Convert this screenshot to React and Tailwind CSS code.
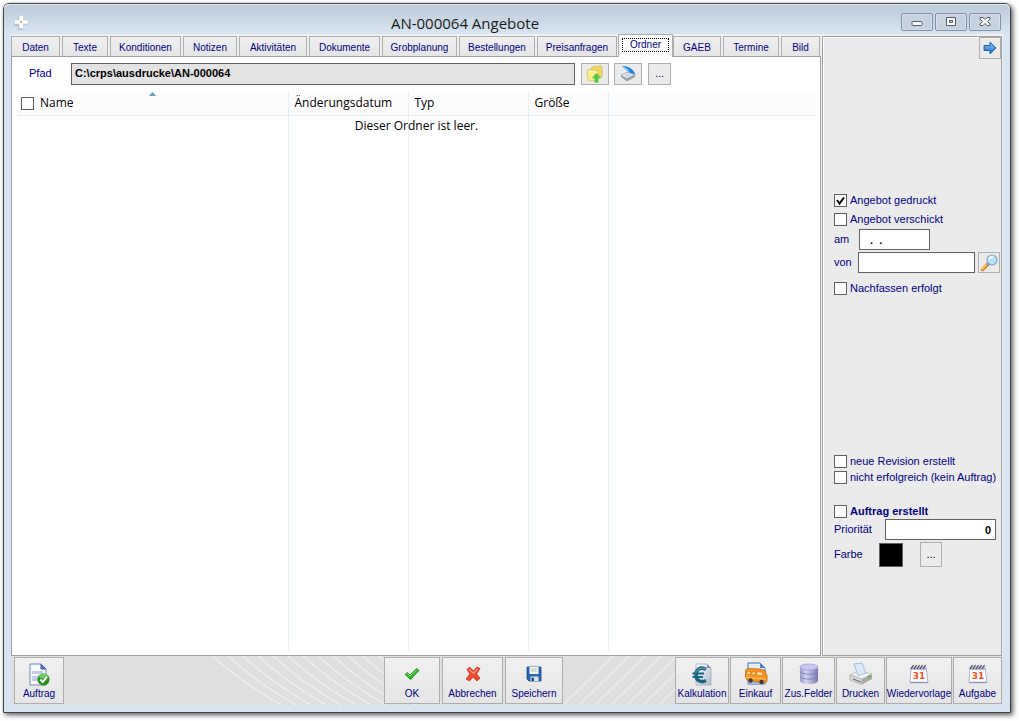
import React, { useState } from 'react';

const tabs = [
  { name: 'Daten', width: 'w-[49px]' },
  { name: 'Texte', width: 'w-[46px]' },
  { name: 'Konditionen', width: 'w-[71px]' },
  { name: 'Notizen', width: 'w-[54px]' },
  { name: 'Aktivitäten', width: 'w-[68px]' },
  { name: 'Dokumente', width: 'w-[71px]' },
  { name: 'Grobplanung', width: 'w-[75px]' },
  { name: 'Bestellungen', width: 'w-[76px]' },
  { name: 'Preisanfragen', width: 'w-[80px]' },
  { name: 'Ordner', width: 'w-[55px]' },
  { name: 'GAEB', width: 'w-[48px]' },
  { name: 'Termine', width: 'w-[56px]' },
  { name: 'Bild', width: 'w-[39px]' },
];

/* ---------- icons ---------- */

function PlusLogo() {
  return (
    <svg width="16" height="16" viewBox="0 0 16 16">
      <path d="M5 3h4v4h5v4H10v5H5v-4H1V7h4z" fill="#a9b4c0" opacity=".7" />
      <path d="M6 1.500h4.500V6H15v4h-4.500v4.500H6V10H1.500V6H6z" fill="#fff" stroke="#b9d3e6" strokeWidth=".6" />
      <circle cx="8" cy="8" r="1" fill="#f08040" />
    </svg>
  );
}

function FolderUpIcon() {
  return (
    <svg width="18" height="18" viewBox="0 0 18 18">
      <path d="M5 3l4-2 1 1 5-1.500 1 1V12l-4 2H5z" fill="#f3d75e" stroke="#d9b63a" strokeWidth=".7" />
      <path d="M1 5l5-1 1 1.500h5V15l-7 1-3-1z" fill="#fbe98b" stroke="#e0bf48" strokeWidth=".7" />
      <path d="M2.500 7l7-1v8" stroke="#fff6bd" fill="none" />
      <path d="M10.500 8l4.500 5h-2.500v4.500h-4V13H6z" fill="#52c840" stroke="#8be077" strokeWidth=".7" />
    </svg>
  );
}

function ScannerIcon() {
  return (
    <svg width="18" height="18" viewBox="0 0 18 18">
      <path d="M2 10l7-3 7 3v2l-8 4.500L2 12z" fill="#9aa3ad" />
      <path d="M2 10l7-3 7 2.500-8 4z" fill="#eef2f6" stroke="#8b95a0" strokeWidth=".6" />
      <path d="M5 10l4-1.600 4 1.400-5 2.200z" fill="#c8d0d8" />
      <path d="M3 1c5-.5 11 2 13.500 8.500L9.500 7.500z" fill="#1f83dc" />
      <path d="M3 1c3 .5 6 2.500 8 6.900L9.500 7.500z" fill="#8fcdf8" />
    </svg>
  );
}

function ArrowIcon() {
  return (
    <svg width="14" height="14" viewBox="0 0 14 14">
      <defs>
        <linearGradient id="arrow" x1="0" y1="0" x2="0" y2="1">
          <stop offset="0" stopColor="#8cc8fa" />
          <stop offset="1" stopColor="#1a6fd4" />
        </linearGradient>
      </defs>
      <path d="M1 4.500h6V1.200L13 7l-6 5.800V9.500H1z" fill="url(#arrow)" stroke="#1b5fae" />
    </svg>
  );
}

function MagnifierIcon() {
  return (
    <svg width="18" height="18" viewBox="0 0 18 18">
      <path d="M1.500 16.500l6.500-6.500" stroke="#d97b26" strokeWidth="3.400" />
      <path d="M1.500 15.500l5.500-5.500" stroke="#ffc25e" strokeWidth="1.800" />
      <path d="M7 11l1.500-1.500" stroke="#8a94a0" strokeWidth="2.500" />
      <circle cx="12" cy="6" r="5" fill="#b6e2fb" stroke="#86a7c8" strokeWidth="1.200" />
      <path d="M9 5.500c.5-2 2-2.700 4-2.500" stroke="#fff" strokeWidth="1.500" fill="none" />
    </svg>
  );
}

function OrderIcon() {
  return (
    <svg width="22" height="23" viewBox="0 0 22 23">
      <path d="M2 1h11l5 5v16H2z" fill="#f7f9fd" stroke="#7286ad" />
      <path d="M13 1v5h5z" fill="#5b7ec0" stroke="#40619f" />
      <path d="M4 8h11v3H4zM4 13h9v5H4z" fill="#c5cde6" />
      <circle cx="15.500" cy="16.500" r="6" fill="#1f9212" />
      <path d="M10.500 14a5.500 5.500 0 0 1 10 0c-3 2-7 2-10 0z" fill="#6ccb5e" />
      <path d="M12.300 16.500l2.400 2.500 4.300-5" stroke="#fff" strokeWidth="2" fill="none" />
    </svg>
  );
}

function OkIcon() {
  return (
    <svg width="16" height="16" viewBox="0 0 16 16">
      <path d="M1 8.500L3.500 6.500 6 9l6.500-6.500 2.500 2L6.500 13.500z" fill="#2fb52a" stroke="#1c8c1a" strokeWidth=".8" />
      <path d="M3.500 7.500L6 10l6.500-6" stroke="#83e072" strokeWidth=".9" fill="none" />
    </svg>
  );
}

function CancelIcon() {
  return (
    <svg width="16" height="16" viewBox="0 0 16 16">
      <path d="M2 3.500L4.500 1 8.500 5 12 1l3 1.500L11.500 8l3.500 4-3 3L8 11l-3.500 4-3.500-2L5 8z" fill="#f04a2c" stroke="#c12f18" strokeWidth=".8" strokeLinejoin="round" />
      <path d="M4 3.500l4.500 4L12.500 3" stroke="#ff9a80" strokeWidth="1.200" fill="none" />
    </svg>
  );
}

function DiskIcon() {
  return (
    <svg width="16" height="16" viewBox="0 0 16 16">
      <path d="M1 1h14v14H3l-2-2z" fill="#2367b5" stroke="#174b8c" strokeWidth=".8" />
      <path d="M3.500 1h9v7h-9z" fill="#fafafa" />
      <path d="M5 3h6M5 5h6" stroke="#b5b5b5" />
      <path d="M4.500 10.500h8V15h-8z" fill="#dfe6ee" />
      <path d="M5.500 11.500h2.500V15H5.500z" fill="#27507f" />
    </svg>
  );
}

function EuroIcon() {
  return (
    <svg width="22" height="23" viewBox="0 0 22 23">
      <defs>
        <linearGradient id="sheet" x1="0" y1="0" x2="1" y2="1">
          <stop offset="0" stopColor="#fff" />
          <stop offset="1" stopColor="#b3bbcf" />
        </linearGradient>
      </defs>
      <path d="M5 1h11l4 4v17H5z" fill="url(#sheet)" stroke="#a2adc2" strokeWidth=".8" />
      <path d="M16 1v4h4z" fill="#7d93bd" />
      <path d="M15 6.500C9 3 4.500 7 5 12.500S10 20 15 17.500" stroke="#1c6480" strokeWidth="3.600" fill="none" />
      <path d="M14.500 6C9 3.500 4.500 7 4.500 12" stroke="#69b3c9" strokeWidth="1" fill="none" />
      <path d="M1.500 10.500H13M1.500 14H12" stroke="#1c6480" strokeWidth="1.800" />
    </svg>
  );
}

function VanIcon() {
  return (
    <svg width="24" height="24" viewBox="0 0 24 24">
      <path d="M4 1h12l5 5v16H4z" fill="#e6eefc" stroke="#3f6cb4" />
      <path d="M16 1v5h5z" fill="#4f83d0" />
      <path d="M4 17h17v5H4z" fill="#9bb8e6" />
      <path d="M1.500 8l3-1.500 11 .5 5 1.500 2.500 5v6l-3 1.500L3 18l-1.500-3z" fill="#f8961e" stroke="#c46608" strokeWidth=".8" />
      <path d="M3 9.500h3.500l.5 3H3zM8 9.800h3l.5 3H8zM12.500 10h5l2.500 3.500h-7z" fill="#ffd890" stroke="#c46a10" strokeWidth=".5" />
      <path d="M2 15.500l20 1.500" stroke="#ffc46c" />
      <circle cx="6.500" cy="18.500" r="2.200" fill="#413932" />
      <circle cx="17.500" cy="20" r="2.200" fill="#413932" />
    </svg>
  );
}

function DatabaseIcon() {
  return (
    <svg width="20" height="22" viewBox="0 0 20 22">
      <defs>
        <linearGradient id="cyl" x1="0" y1="0" x2="1" y2="0">
          <stop offset="0" stopColor="#9d9dcb" />
          <stop offset=".35" stopColor="#d4d4f3" />
          <stop offset="1" stopColor="#7878ad" />
        </linearGradient>
      </defs>
      <path d="M1 4v14c0 4 18 4 18 0V4z" fill="url(#cyl)" />
      <ellipse cx="10" cy="4" rx="9" ry="3" fill="#c9c9ef" stroke="#9a9ac8" strokeWidth=".7" />
      <path d="M1 8.500c0 3.500 18 3.500 18 0M1 13.500c0 3.500 18 3.500 18 0" stroke="#7474aa" strokeWidth=".8" fill="none" />
    </svg>
  );
}

function PrinterIcon() {
  return (
    <svg width="24" height="24" viewBox="0 0 24 24">
      <path d="M1 13l9-4 13 3v5L13 22.500 1 18z" fill="#a9a9a9" />
      <path d="M1 13l9-4 13 3-10 5z" fill="#f2f2f2" stroke="#b2b2b2" strokeWidth=".6" />
      <path d="M1 13l12 4v5.500L1 18z" fill="#d9d9d9" stroke="#a6a6a6" strokeWidth=".6" />
      <path d="M5 2l8-1 4 10-8 2.500z" fill="#d6eafa" stroke="#94b5d2" strokeWidth=".8" />
      <path d="M4 17l8 3" stroke="#6d6d6d" strokeWidth="1.300" />
      <circle cx="20" cy="14.500" r="1.300" fill="#4cc735" />
    </svg>
  );
}

function CalendarIcon() {
  return (
    <svg width="20" height="22" viewBox="0 0 20 22">
      <path d="M2 4h15l2 15.500H1z" fill="#fdfdff" stroke="#9aa3c8" strokeWidth=".8" />
      <path d="M2 4h15.500v3H2z" fill="#b6badb" />
      <path d="M2 6l2.500-4M5 6l2.500-4M8 6l2.500-4M11 6l2.500-4M14 6l2.500-4" stroke="#55555f" strokeWidth="1.300" />
      <text x="10" y="16" textAnchor="middle" fontSize="9" fontWeight="700" fill="#f0501e" fontFamily="DejaVu Sans, sans-serif">31</text>
      <path d="M1 19.500h18" stroke="#8e96bd" strokeWidth="1.500" />
    </svg>
  );
}

/* ---------- small controls ---------- */

function CaptionButton({ label, children }) {
  return (
    <button aria-label={label} className="flex h-[18px] w-8 items-center justify-center rounded-[2px] border border-[#8090ac] bg-[#c5d3e1] shadow-[inset_0_0_0_1px_#d4dfeb]">
      <svg width="14" height="12" viewBox="0 0 14 12">{children}</svg>
    </button>
  );
}

function ToolButton({ label, className, children }) {
  return (
    <button aria-label={label} className={`flex shrink-0 items-center justify-center border border-[#adadad] bg-[#ebebeb] text-[11px] ${className}`}>
      {children}
    </button>
  );
}

function Check({ label, bold, defaultChecked, className }) {
  return (
    <label className={`flex h-[13px] items-center gap-[3px] whitespace-nowrap ${bold ? 'font-bold' : ''} ${className}`}>
      <span className="grid shrink-0">
        <input type="checkbox" defaultChecked={defaultChecked} className="peer col-start-1 row-start-1 size-[13px] appearance-none border border-[#606060] bg-white" />
        <svg viewBox="0 0 13 13" className="pointer-events-none invisible col-start-1 row-start-1 size-[13px] peer-checked:visible">
          <path d="M3 6l2.500 3.500L10 3.500" stroke="#000" strokeWidth="2" fill="none" />
        </svg>
      </span>
      {label}
    </label>
  );
}

function FooterButton({ label, icon, className }) {
  return (
    <button className={`flex h-[47px] shrink-0 flex-col items-center justify-end border border-[#adadad] bg-linear-to-b from-[#f0f0f0] to-[#e5e5e5] pb-[3px] text-[10px] leading-3 whitespace-nowrap ${className}`}>
      <span className="flex h-7 items-center">{icon}</span>
      {label}
    </button>
  );
}

function FooterPattern() {
  const down = Array.from({ length: 12 }, (_, i) => 202 + i * 15);
  const up = Array.from({ length: 8 }, (_, i) => 552 + i * 16);
  const rays = Array.from({ length: 9 }, (_, i) => 98 + i * 4);
  return (
    <svg className="absolute inset-0 size-full" aria-hidden="true">
      <g fill="none" stroke="#f0f0f0">
        {rays.map((x) => (
          <path key={x} d={`M${x + 10} 0Q${x + 2} 22 ${x} 50`} opacity=".3" />
        ))}
        {down.map((x) => (
          <path key={x} d={`M${x} 0Q${x + 28} 26 ${x + 68} 49`} strokeWidth="1.500" opacity=".8" />
        ))}
        {up.map((x) => (
          <path key={x} d={`M${x} 49L${x + 50} 0`} strokeWidth="1.500" opacity=".7" />
        ))}
      </g>
    </svg>
  );
}

function FileList() {
  return (
    <div className="relative mt-[7px] mr-1 mb-1 ml-[5px] grow font-['Open_Sans',sans-serif] text-[12px] text-black">
      <table className="h-full w-full table-fixed border-collapse">
        <thead>
          <tr className="h-[23px] border-b border-[#e8eef7] bg-[#fcfcfc] text-left">
            <th className="w-[271px] p-0 font-normal">
              <div className="relative flex items-center gap-[6px] pl-1">
                <input type="checkbox" aria-label="Alle auswählen" className="size-[13px] appearance-none border border-[#606060] bg-white" />
                Name
                <svg width="7" height="4" viewBox="0 0 7 4" className="absolute -top-[2px] left-[132px]">
                  <path d="M0 4l3.500-4L7 4z" fill="#5da0bf" />
                </svg>
              </div>
            </th>
            <th className="w-[120px] border-l border-[#e8f1fb] p-0 pl-[6px] font-normal">Änderungsdatum</th>
            <th className="w-[120px] border-l border-[#e8f1fb] p-0 pl-[6px] font-normal">Typ</th>
            <th className="w-[80px] border-l border-[#e8f1fb] p-0 pl-[6px] font-normal">Größe</th>
            <th className="border-l border-[#e8f1fb] p-0" />
          </tr>
        </thead>
        <tbody>
          <tr>
            <td />
            <td className="border-l border-[#e8f1fb]" />
            <td className="border-l border-[#e8f1fb]" />
            <td className="border-l border-[#e8f1fb]" />
            <td className="border-l border-[#e8f1fb]" />
          </tr>
        </tbody>
      </table>
      <p className="absolute inset-x-0 top-[26px] text-center leading-4">Dieser Ordner ist leer.</p>
    </div>
  );
}

function SidePanel() {
  return (
    <aside className="flex w-[180px] shrink-0 flex-col border border-[#a0a0a0] bg-[#ebebeb] pl-[11px] shadow-[inset_1px_1px_0_#fff]">
      <ToolButton label="Weiter" className="h-[22px] w-[22px] self-end">
        <ArrowIcon />
      </ToolButton>
      <Check label="Angebot gedruckt" defaultChecked className="mt-[135px]" />
      <Check label="Angebot verschickt" className="mt-[6px]" />
      <div className="mt-[3px] flex h-[21px] items-center">
        <label htmlFor="am" className="w-[25px]">am</label>
        <input id="am" defaultValue="  .  ." className="h-[21px] w-[71px] border border-[#606060] bg-white px-1 font-bold whitespace-pre text-black" />
      </div>
      <div className="mt-[2px] flex h-[21px] items-center">
        <label htmlFor="von" className="w-6">von</label>
        <input id="von" className="h-[21px] w-[117px] border border-[#606060] bg-white px-1 text-black" />
        <ToolButton label="Suchen" className="ml-[3px] h-[21px] w-[22px]">
          <MagnifierIcon />
        </ToolButton>
      </div>
      <Check label="Nachfassen erfolgt" className="mt-[9px]" />

      <Check label="neue Revision erstellt" className="mt-[160px]" />
      <Check label="nicht erfolgreich (kein Auftrag)" className="mt-[3px]" />
      <Check label="Auftrag erstellt" bold className="mt-[21px]" />
      <div className="mt-px flex h-[21px] items-center">
        <label htmlFor="prio" className="w-[51px]">Priorität</label>
        <input id="prio" defaultValue="0" className="h-[21px] w-[111px] border border-[#606060] bg-white px-1 text-right font-bold text-black" />
      </div>
      <div className="mt-[2px] flex h-[25px] items-center">
        <span className="w-[45px]">Farbe</span>
        <span className="size-6 border border-[#606060] bg-black" />
        <ToolButton label="Farbe wählen" className="ml-[17px] h-[25px] w-[22px] text-black">...</ToolButton>
      </div>
    </aside>
  );
}

export default function App() {
  const [active, setActive] = useState('Ordner');

  return (
    <div className="h-screen min-w-[1000px] bg-white pt-[3px] pr-2 pb-2 pl-[3px] font-['Liberation_Sans',Arial,sans-serif] text-[11px] text-[#000080]">
      <div className="flex h-full flex-col rounded-t-[6px] border border-[#3f4348] bg-[#d7e4f2] pr-[7px] pb-[7px] pl-[7px] shadow-[2px_2px_5px_rgba(0,0,0,0.65)]">
        <header className="-mx-[7px] flex h-[30px] shrink-0 items-center rounded-t-[5px] bg-linear-to-b from-[#bccbd9] to-[#d7e4f2] px-[9px] shadow-[inset_0_1px_0_#e4edf5]">
          <span className="pt-[6px]"><PlusLogo /></span>
          <h1 className="grow pt-[7px] text-center font-['Open_Sans',sans-serif] text-[15px] leading-5 text-[#1a1a1a]">AN-000064 Angebote</h1>
          <div className="flex gap-[2px] pt-[5px]">
            <CaptionButton label="Minimieren">
              <rect x="2" y="5.500" width="10" height="4" rx="1" fill="#fff" stroke="#555c66" />
            </CaptionButton>
            <CaptionButton label="Maximieren">
              <path d="M2.500 1.500h9v8h-9zM5.500 4.500v2h3v-2z" fillRule="evenodd" fill="#fff" stroke="#555c66" />
            </CaptionButton>
            <CaptionButton label="Schließen">
              <path d="M2 1.500h3l2 2 2-2h3v1.500L9.500 5.500 12 8v1.500H9l-2-2-2 2H2V8l2.500-2.500L2 3z" fill="#fff" stroke="#555c66" />
            </CaptionButton>
          </div>
        </header>

        <div className="flex min-h-0 grow gap-px bg-[#f0f0f0] pt-[2px] pr-px">
          <main className="flex min-w-0 grow flex-col">
            <nav className="flex h-5 shrink-0 items-end gap-[2px]">
              {tabs.map((tab) => (
                <button
                  key={tab.name}
                  onClick={() => setActive(tab.name)}
                  className={`shrink-0 border border-b-0 border-[#adadad] text-[10px] ${tab.width} ${
                    active === tab.name
                      ? 'relative z-10 -mr-[2px] -mb-px -ml-px h-[23px] bg-white px-[3px] pb-[3px]'
                      : 'h-5 bg-linear-to-b from-[#f0f0f0] to-[#e5e5e5] pt-px'
                  }`}
                >
                  {active === tab.name ? (
                    <span className="block border border-dotted border-black leading-3">{tab.name}</span>
                  ) : (
                    tab.name
                  )}
                </button>
              ))}
            </nav>
            <section className="flex min-h-0 grow flex-col border border-[#a0a0a0] bg-white">
              <div className="mt-[5px] flex h-[23px] shrink-0 items-center pl-[17px]">
                <label htmlFor="pfad" className="w-[42px]">Pfad</label>
                <input id="pfad" readOnly value="C:\crps\ausdrucke\AN-000064" className="h-[22px] w-[504px] border border-[#606060] bg-[#e3e3e3] px-[3px] pb-[2px] font-bold text-black" />
                <ToolButton label="Ordner öffnen" className="ml-[6px] h-[22px] w-7"><FolderUpIcon /></ToolButton>
                <ToolButton label="Scannen" className="ml-[5px] h-[22px] w-7"><ScannerIcon /></ToolButton>
                <ToolButton label="Pfad wählen" className="ml-[6px] h-[22px] w-[23px]">...</ToolButton>
              </div>
              <FileList />
            </section>
          </main>
          <SidePanel />
        </div>

        <footer className="relative flex h-[49px] shrink-0 items-center overflow-hidden bg-[#dfdfdf] pr-px pl-[3px]">
          <FooterPattern />
          <div className="relative flex grow">
            <FooterButton label="Auftrag" icon={<OrderIcon />} className="w-[50px]" />
            <div className="ml-80 flex gap-[2px]">
              <FooterButton label="OK" icon={<OkIcon />} className="w-14" />
              <FooterButton label="Abbrechen" icon={<CancelIcon />} className="w-[61px]" />
              <FooterButton label="Speichern" icon={<DiskIcon />} className="w-[58px]" />
            </div>
            <div className="ml-auto flex gap-px">
              <FooterButton label="Kalkulation" icon={<EuroIcon />} className="w-[54px]" />
              <FooterButton label="Einkauf" icon={<VanIcon />} className="w-[51px]" />
              <FooterButton label="Zus.Felder" icon={<DatabaseIcon />} className="w-[53px]" />
              <FooterButton label="Drucken" icon={<PrinterIcon />} className="w-[49px]" />
              <FooterButton label="Wiedervorlage" icon={<CalendarIcon />} className="w-[66px]" />
              <FooterButton label="Aufgabe" icon={<CalendarIcon />} className="w-[49px]" />
            </div>
          </div>
        </footer>
      </div>
    </div>
  );
}
